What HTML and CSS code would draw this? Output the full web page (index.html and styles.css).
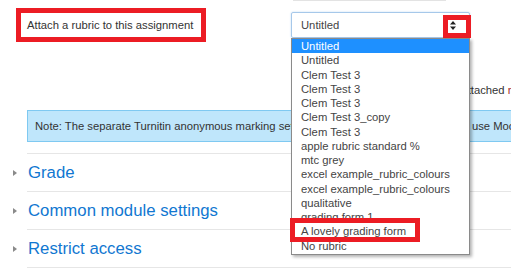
FILE: index.html
```html
<!DOCTYPE html>
<html lang="en">
<head>
  <meta charset="UTF-8" />
  <title>Turnitin assignment settings</title>
  <link rel="stylesheet" href="styles.css">
</head>
<body>
  <div class="prev-field"></div>

  <div class="form-row">
    <div class="label-box">Attach a rubric to this assignment</div>
    <div class="select-wrap">
      <div class="select">
        <span>Untitled</span>
        <svg class="arrows" width="6" height="9" viewBox="0 0 6 9">
          <path d="M3 0 L6 3.5 L0 3.5 Z M0 5.5 L6 5.5 L3 9 Z" fill="#222" />
        </svg>
      </div>
      <div class="arrow-mark"></div>

      <ul class="options">
        <li class="active">Untitled</li>
        <li>Untitled</li>
        <li>Clem Test 3</li>
        <li>Clem Test 3</li>
        <li>Clem Test 3</li>
        <li>Clem Test 3_copy</li>
        <li>Clem Test 3</li>
        <li>apple rubric standard %</li>
        <li>mtc grey</li>
        <li>excel example_rubric_colours</li>
        <li>excel example_rubric_colours</li>
        <li>qualitative</li>
        <li>grading form 1</li>
        <li>A lovely grading form</li>
        <li>No rubric</li>
        <div class="option-mark"></div>
      </ul>
    </div>
  </div>

  <p class="field-note">There is an attached <span class="warn">rubric</span></p>

  <div class="info">Note: The separate Turnitin anonymous marking setting will be ignored if you choose to use Moodle's anonymous submissions</div>

  <div class="section"><span class="caret"></span>Grade</div>
  <div class="section"><span class="caret"></span>Common module settings</div>
  <div class="section"><span class="caret"></span>Restrict access</div>
  <div class="section-end"></div>
</body>
</html>
```

FILE: styles.css
```css
body {
  margin: 0;
  font-family: 'Liberation Sans', Arial, sans-serif;
  font-size: 11.25px;
  color: #373a3c;
  overflow: hidden;
  white-space: nowrap;
}

.prev-field {
  margin-left: 293px;
  width: 153px;
  height: 1px;
  background: #e3e3e3;
}

.form-row {
  display: flex;
  margin-top: 7px;
}

.label-box {
  box-sizing: border-box;
  margin-left: 16px;
  width: 190px;
  height: 34px;
  border: 5px solid #ec1c24;
  padding-left: 6px;
  line-height: 24px;
  color: #333;
}

.select-wrap {
  position: relative;
  margin-left: 85px;
  margin-top: 4px;
}

.select {
  box-sizing: border-box;
  display: flex;
  align-items: center;
  justify-content: space-between;
  width: 179px;
  height: 26px;
  padding: 0 10px 0 9px;
  border: 1px solid #a6c8ea;
  border-radius: 2px;
  box-shadow: 0 0 2px #b9d7f3;
  color: #444;
}

.arrow-mark {
  position: absolute;
  left: 152px;
  top: 3px;
  box-sizing: border-box;
  width: 28px;
  height: 23px;
  border: 5px solid #ec1c24;
}

.arrows {
  position: relative;
  z-index: 2;
  margin-top: 1px;
  margin-right: 3px;
}

.options {
  position: absolute;
  top: 26px;
  left: 0;
  box-sizing: border-box;
  width: 179px;
  margin: 0;
  padding: 0 0 1px;
  list-style: none;
  background: #fff;
  border: 1px solid #8a8a8a;
  box-shadow: 2px 2px 3px rgba(0, 0, 0, 0.3);
  z-index: 5;
}

.options li {
  height: 14.25px;
  line-height: 14.25px;
  padding-left: 9px;
  color: #444;
}

.options li.active {
  background: #1e90ff;
  color: #fff;
}

.option-mark {
  position: absolute;
  left: -2px;
  top: 179px;
  box-sizing: border-box;
  width: 130px;
  height: 24px;
  border: 5px solid #ec1c24;
}

.field-note {
  margin: 41px 0 0 402px;
  line-height: 14px;
  color: #333;
}

.warn {
  color: #a52a2a;
}

.info {
  box-sizing: border-box;
  margin: 13px 0 0 27px;
  height: 32px;
  padding-left: 7px;
  line-height: 30px;
  background: #bfe6fb;
  border: 1px solid #7fc9f1;
  border-right: none;
  color: #333;
}

.section {
  display: flex;
  align-items: center;
  margin: 11px 0 0 27px;
  height: 37px;
  border-top: 1px solid #e6e6e6;
  font-size: 16.75px;
  color: #1177d1;
}

.section + .section {
  margin-top: 0;
}

.caret {
  width: 0;
  height: 0;
  margin: 0 11px 0 -14px;
  border-top: 3.5px solid transparent;
  border-bottom: 3.5px solid transparent;
  border-left: 4px solid #8a8a8a;
}

.section-end {
  margin-left: 27px;
  border-top: 1px solid #e6e6e6;
}
```
